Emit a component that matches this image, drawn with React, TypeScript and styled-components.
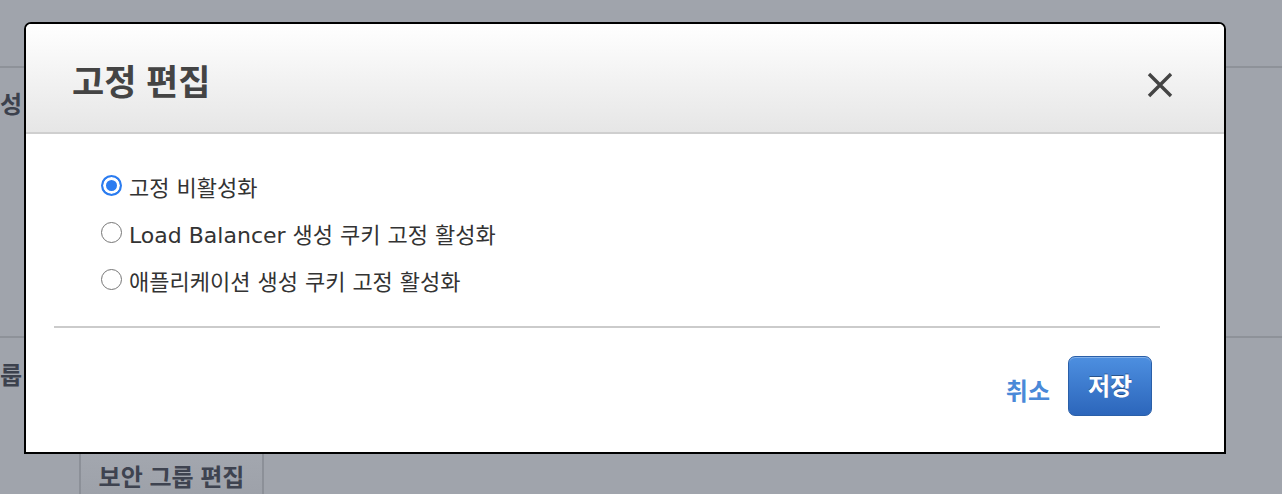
import { useState } from "react";
import styled, { createGlobalStyle } from "styled-components";

const GlobalStyle = createGlobalStyle`
  html, body {
    margin: 0;
    padding: 0;
    background: #a0a4ac;
  }
  body {
    font-family: "Liberation Sans", "Noto Sans CJK KR", sans-serif;
  }
`;

const Page = styled.div`
  position: relative;
  width: 1282px;
  height: 494px;
  overflow: hidden;
  background: #a0a4ac;
`;

const PageTop = styled.div`
  height: 66px;
`;

const Section = styled.div<{ $height?: number; $pad: number }>`
  display: flex;
  gap: 57px;
  height: ${({ $height }) => ($height ? `${$height}px` : "auto")};
  padding-top: ${({ $pad }) => $pad}px;
  box-sizing: border-box;
  border-top: 2px solid #8e9299;
`;

const SectionLabel = styled.div`
  display: flex;
  justify-content: flex-end;
  width: 22px;
  flex-shrink: 0;
  white-space: nowrap;
  font-size: 24px;
  line-height: 30px;
  font-weight: bold;
  color: #3c414d;
`;

const SectionBody = styled.div<{ $pad: number }>`
  padding-top: ${({ $pad }) => $pad}px;
`;

const GhostButton = styled.button`
  width: 185px;
  height: 46px;
  padding: 0;
  border: none;
  border-left: 2px solid #8c9098;
  border-right: 2px solid #8c9098;
  background: linear-gradient(#a3a7af, #9da1a9);
  font-family: inherit;
  font-size: 24px;
  font-weight: bold;
  color: #3e4350;
`;

const Modal = styled.div`
  position: absolute;
  top: 22px;
  left: 24px;
  width: 1202px;
  height: 432px;
  box-sizing: border-box;
  display: flex;
  flex-direction: column;
  background: #fff;
  border: 2px solid #000;
  border-radius: 7px 7px 0 0;
  overflow: hidden;
`;

const Header = styled.div`
  display: flex;
  align-items: center;
  justify-content: space-between;
  height: 110px;
  box-sizing: border-box;
  padding: 10px 51px 0 46px;
  background: linear-gradient(#ffffff, #e6e6e6);
  border-bottom: 2px solid #cfcfcf;
`;

const Title = styled.h2`
  margin: 0;
  font-size: 35px;
  line-height: 40px;
  font-weight: bold;
  color: #444;
`;

const CloseButton = styled.button`
  display: flex;
  margin-top: 4px;
  padding: 0;
  border: none;
  background: none;
  cursor: pointer;
`;

const Body = styled.div`
  padding: 28px 0 0 75px;
  height: 192px;
  box-sizing: border-box;
`;

const Option = styled.label`
  display: flex;
  align-items: center;
  height: 47px;
  font-family: "DejaVu Sans", "Noto Sans CJK KR", sans-serif;
  font-size: 22px;
  color: #333;
  cursor: pointer;
`;

const Radio = styled.input`
  appearance: none;
  width: 21px;
  height: 21px;
  margin: 0 7px 0 0;
  border: 1.5px solid #767676;
  border-radius: 50%;
  background: #fff;
  box-sizing: border-box;

  &:checked {
    border: 2px solid #2b7cf0;
    background: #2b7cf0;
    box-shadow: inset 0 0 0 3px #fff;
  }
`;

const Divider = styled.hr`
  margin: 0 64px 0 28px;
  height: 2px;
  border: none;
  background: #cbcbcb;
`;

const Footer = styled.div`
  display: flex;
  align-items: center;
  justify-content: flex-end;
  gap: 18px;
  padding: 28px 72px 0 0;
`;

const CancelLink = styled.button`
  margin-top: 6px;
  padding: 0;
  border: none;
  background: none;
  font-family: inherit;
  font-size: 24px;
  font-weight: bold;
  color: #4a89d8;
  cursor: pointer;
`;

const SaveButton = styled.button`
  width: 84px;
  height: 60px;
  padding: 0 0 4px;
  border: 1px solid #2a5fa8;
  border-radius: 7px;
  background: linear-gradient(#4d8fe0, #2c66bb);
  box-shadow: inset 0 1px 0 rgba(255, 255, 255, 0.3);
  font-family: inherit;
  font-size: 24px;
  font-weight: bold;
  color: #fff;
  text-shadow: 0 -1px 0 rgba(0, 0, 0, 0.35);
  cursor: pointer;
`;

const options = [
  { id: "none", label: "고정 비활성화" },
  { id: "lb", label: "Load Balancer 생성 쿠키 고정 활성화" },
  { id: "app", label: "애플리케이션 생성 쿠키 고정 활성화" }
];

export default function App(): JSX.Element {
  const [selected, setSelected] = useState("none");

  return (
    <>
      <GlobalStyle />
      <Page>
        <PageTop />
        <Section $height={270} $pad={22}>
          <SectionLabel>속성</SectionLabel>
        </Section>
        <Section $pad={23}>
          <SectionLabel>보안 그룹</SectionLabel>
          <SectionBody $pad={91}>
            <GhostButton>보안 그룹 편집</GhostButton>
          </SectionBody>
        </Section>

        <Modal>
          <Header>
            <Title>고정 편집</Title>
            <CloseButton aria-label="닫기">
              <svg width="26" height="26" viewBox="0 0 26 26">
                <path
                  d="M2 2 L24 24 M24 2 L2 24"
                  stroke="#444"
                  strokeWidth="3.4"
                  strokeLinecap="butt"
                />
              </svg>
            </CloseButton>
          </Header>
          <Body>
            {options.map(option => (
              <Option key={option.id}>
                <Radio
                  type="radio"
                  name="stickiness"
                  checked={selected === option.id}
                  onChange={() => setSelected(option.id)}
                />
                {option.label}
              </Option>
            ))}
          </Body>
          <Divider />
          <Footer>
            <CancelLink>취소</CancelLink>
            <SaveButton>저장</SaveButton>
          </Footer>
        </Modal>
      </Page>
    </>
  );
}
